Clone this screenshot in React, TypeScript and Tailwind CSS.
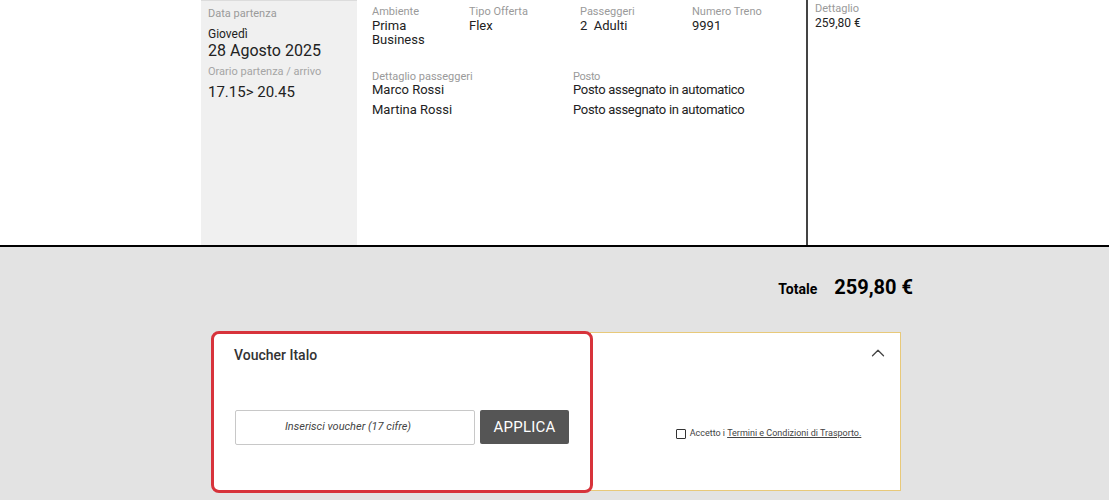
import { ChevronUp } from 'lucide-react'

const font = { fontFamily: 'Roboto, "Liberation Sans", sans-serif' }

function Label({ children }: { children: React.ReactNode }) {
  return <p className="text-[11px] leading-[13px] text-[#9a9a9a]">{children}</p>
}

export default function App() {
  return (
    <div className="w-[1109px] h-[500px] overflow-hidden bg-[#e3e3e3] text-[#222]" style={font}>
      {/* Trip summary */}
      <div className="h-[247px] bg-white border-b-2 border-black flex">
        <div className="ml-[201px] w-[156px] bg-[#f0f0f0] border-t border-[#dcdcdc] pl-[7px] pt-[6px]">
          <Label>Data partenza</Label>
          <p className="mt-[7px] text-[12px] leading-[14px]">Giovedì</p>
          <p className="text-[16px] leading-[20px]">28 Agosto 2025</p>
          <p className="mt-[4px] text-[11px] leading-[13px] text-[#a5a5a5]">Orario partenza / arrivo</p>
          <p className="mt-[5px] text-[15px] leading-[18px]">17.15&gt; 20.45</p>
        </div>

        <div className="w-[449px] pl-[15px] pt-[5px] text-[13px] leading-[14px]">
          <div className="flex">
            <div className="w-[97px]">
              <Label>Ambiente</Label>
              <p className="mt-[1px]">Prima<br />Business</p>
            </div>
            <div className="w-[111px]">
              <Label>Tipo Offerta</Label>
              <p className="mt-[1px]">Flex</p>
            </div>
            <div className="w-[112px]">
              <Label>Passeggeri</Label>
              <p className="mt-[1px]">2&nbsp; Adulti</p>
            </div>
            <div>
              <Label>Numero Treno</Label>
              <p className="mt-[1px]">9991</p>
            </div>
          </div>
          <div className="flex mt-[23px]">
            <div className="w-[201px]">
              <Label>Dettaglio passeggeri</Label>
              <p>Marco Rossi</p>
              <p className="mt-[6px]">Martina Rossi</p>
            </div>
            <div className="tracking-[-0.3px]">
              <Label>Posto</Label>
              <p>Posto assegnato in automatico</p>
              <p className="mt-[6px]">Posto assegnato in automatico</p>
            </div>
          </div>
        </div>

        <div className="border-l-2 border-[#444] flex-1 pl-[7px] pt-[2px]">
          <Label>Dettaglio</Label>
          <p className="text-[12px] leading-[14px] mt-[1px]">259,80 €</p>
        </div>
      </div>

      {/* Totale */}
      <div className="ml-[211px] w-[702px] flex justify-end items-baseline gap-[17px] mt-[25px]">
        <span className="text-[14px] font-bold text-black">Totale</span>
        <span className="text-[20px] font-bold text-black">259,80 €</span>
      </div>

      {/* Voucher + terms */}
      <div className="ml-[211px] mt-[29px] flex items-start">
        <div className="relative z-10 w-[382px] h-[162px] bg-white border-[3px] border-[#d7333b] rounded-[8px] px-[20px] pt-[12px]">
          <p className="text-[14px] leading-[18px] font-medium text-[#333]">Voucher Italo</p>
          <div className="flex gap-[5px] mt-[46px] ml-[1px]">
            <div className="w-[240px] h-[35px] border border-[#c8c8c8] rounded-[2px] flex items-center justify-center">
              <span className="text-[11px] italic text-[#444] -ml-[14px]">Inserisci voucher (17 cifre)</span>
            </div>
            <button className="w-[89px] h-[34px] bg-[#555555] rounded-[2px] text-white text-[15px] tracking-[0.2px]">
              APPLICA
            </button>
          </div>
        </div>
        <div className="-ml-[3px] mt-[1px] w-[311px] h-[159px] bg-white border border-[#e8c97a] flex flex-col">
          <div className="flex justify-end pr-[11px] pt-[9px]">
            <ChevronUp className="w-[22px] h-[22px] text-[#444]" strokeWidth={1.4} />
          </div>
          <div className="flex items-center justify-center gap-[4px] mt-[63px] pl-[46px] text-[9px] text-[#444]">
            <span className="w-[10px] h-[10px] border border-[#333] rounded-[1px] bg-white" />
            <span>
              Accetto i <span className="underline">Termini e Condizioni di Trasporto.</span>
            </span>
          </div>
        </div>
      </div>
    </div>
  )
}
